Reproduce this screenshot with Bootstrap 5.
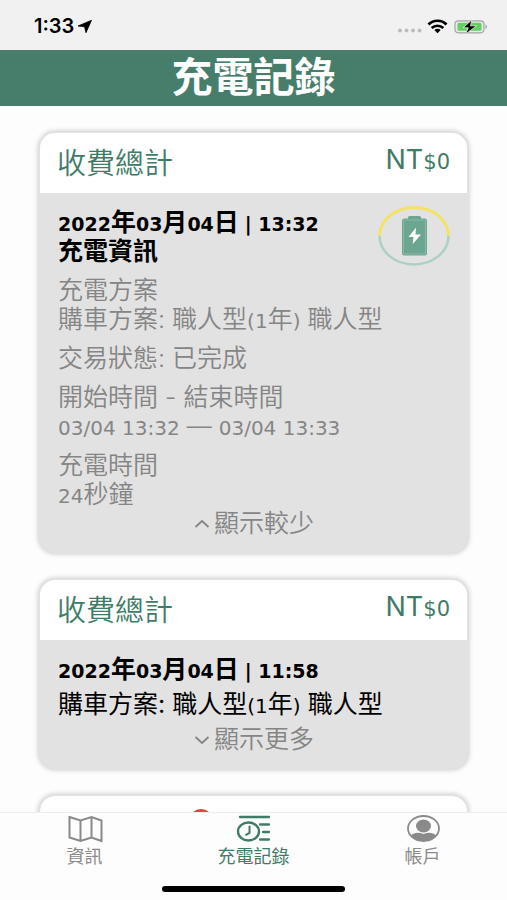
<!DOCTYPE html>
<html lang="zh-Hant">
<head>
<meta charset="utf-8">
<meta name="viewport" content="width=device-width, initial-scale=1">
<title>充電記錄</title>
<link href="https://cdn.jsdelivr.net/npm/bootstrap@5.3.0/dist/css/bootstrap.min.css" rel="stylesheet">
<style>
  body { font-family: Inter, "Noto Sans CJK TC", sans-serif; font-size: 25px; line-height: 29px; background: #fdfdfd; color: #000; }
  .status-bar { background: #f1f1f1; height: 50px; padding: 3px 18px 0 34px; font-size: 20px; }
  .page-head { background: #467e6b; height: 56px; }
  .page-head h1 { font-size: 41px; line-height: 54px; }
  .feed { padding: 26px 39px 0; min-height: 0; gap: 26px; }
  .record { border-radius: 16px; background: #e2e2e2; box-shadow: 0 0 5px 1px rgba(0, 0, 0, .2); border: 1px solid #e2e2e2; overflow: hidden; flex-shrink: 0; }
  .record-head { background: #fff; color: #3f7c67; height: 60px; padding: 0 17px; }
  .record-head h2 { font-size: 29px; line-height: 62px; font-weight: 350; }
  .amount { font-size: 27px; line-height: 54px; }
  .record-body { padding: 15px 17px 14px 18px; }
  .num { font-family: "DejaVu Sans", sans-serif; font-size: 20px; line-height: 20px; font-weight: 400; }
  .date-num { font-family: "DejaVu Sans", sans-serif; font-size: 19px; line-height: 20px; }
  .cents { font-family: "DejaVu Sans", sans-serif; font-size: 21px; line-height: 20px; }
  .info { color: #858585; font-weight: 350; }
  .more { color: #858585; font-weight: 350; border: 0; background: none; padding: 0; gap: 4px; }
  .gap-info { gap: 10px; }
  .gap-brief { gap: 6px; }
  .peek { min-height: 80px; padding: 13px 149px; background: #fff; }
  .tab-bar { background: #fdfdfd; border-top: 1px solid #eee; height: 88px; flex-shrink: 0; }
  .tab-bar a { font-size: 18px; line-height: 26px; color: #8a8a8a; padding-top: 1px; }
  .tab-bar a.active { color: #3f7c67; }
  .home-line { width: 36%; height: 6px; border-radius: 3px; background: #000; margin-bottom: 8px; }
</style>
<script src="https://cdn.jsdelivr.net/npm/bootstrap@5.3.0/dist/js/bootstrap.bundle.min.js"></script>
</head>
<body class="vh-100 d-flex flex-column overflow-hidden">
  <div class="status-bar d-flex align-items-center justify-content-between flex-shrink-0">
    <div class="d-flex align-items-center gap-1 fw-semibold">
      <span>1:33</span>
      <svg width="14" height="13" viewBox="0 0 14 13" aria-hidden="true"><path d="M13.500.3 0 6l6.500.7L8 12.700z" stroke="#000" stroke-width=".8" stroke-linejoin="round"/></svg>
    </div>
    <div class="d-flex align-items-center">
      <svg width="92" height="16" viewBox="0 0 92 16" aria-hidden="true">
        <g fill="#bcbcbc"><circle cx="3" cy="11.500" r="2"/><circle cx="9.500" cy="11.500" r="2"/><circle cx="16" cy="11.500" r="2"/><circle cx="22.500" cy="11.500" r="2"/></g>
        <g fill="none" stroke="#000" stroke-width="2.700"><path d="M31.500 5.500c5-5 13-5 18 0"/><path d="M34.700 9c3.300-3 8.300-3 11.600 0"/></g>
        <path d="M37.300 11c2-1.600 4.400-1.600 6.400 0l-3.200 3.200z"/>
        <rect x="58" y="1.800" width="29" height="12" rx="3.500" fill="#e9e9e9" stroke="#a4a4a4" stroke-width="1.200"/>
        <rect x="60.500" y="3.800" width="24" height="8" rx="1.500" fill="#63d063"/>
        <path d="M88.500 5.500V10c2-.7 2-3.800 0-4.500z" fill="#a4a4a4"/>
        <path d="M75 .8 66 8.800h5.200l-2.700 6.400L79.500 6.800h-6z" stroke="#e9f6e9" stroke-width=".8"/>
      </svg>
    </div>
  </div>

  <header class="page-head text-white text-center flex-shrink-0">
    <h1 class="m-0 fw-bold">充電記錄</h1>
  </header>

  <main class="feed flex-grow-1 d-flex flex-column overflow-hidden">
    <article class="record">
      <div class="record-head d-flex justify-content-between">
        <h2 class="m-0">收費總計</h2>
        <div class="amount">NT<span class="cents">$0</span></div>
      </div>
      <div class="record-body d-flex flex-column gap-info">
        <div class="d-flex justify-content-between">
          <div class="fw-bold">
            <div><span class="date-num">2022</span>年<span class="date-num">03</span>月<span class="date-num">04</span>日 <span class="date-num">| 13:32</span></div>
            <div>充電資訊</div>
          </div>
          <svg class="overflow-visible" width="72" height="58" viewBox="0 0 72 58" role="img" aria-label="充電狀態">
            <path d="M1.500 28a34.500 28.500 0 0 0 69 0" fill="none" stroke="#acd1c3" stroke-width="2.500"/>
            <path d="M1.500 28a34.500 28.500 0 0 1 69 0" fill="none" stroke="#f4e262" stroke-width="3"/>
            <rect x="30" y="8" width="13" height="5" rx="1.500" fill="#6ba691"/>
            <rect x="24" y="10.500" width="25" height="37" rx="2.500" fill="#6ba691"/>
            <rect x="25.500" y="12" width="22" height="34" rx="1" fill="none" stroke="#93bfae" stroke-width=".8"/>
            <path d="M38 19.500 30.500 29h5l-.8 7L43 26.500h-5.500z" fill="#fff"/>
          </svg>
        </div>
        <div class="info">
          <div>充電方案</div>
          <div>購車方案: 職人型<span class="num">(1</span>年<span class="num">)</span> 職人型</div>
        </div>
        <div class="info">交易狀態: 已完成</div>
        <div class="info">
          <div>開始時間 - 結束時間</div>
          <div><span class="num">03/04 13:32</span> — <span class="num">03/04 13:33</span></div>
        </div>
        <div>
          <div class="info">充電時間</div>
          <div class="info"><span class="num">24</span>秒鐘</div>
          <button type="button" class="more d-flex align-items-center mx-auto">
            <svg width="16" height="10" viewBox="0 0 16 10" fill="none" stroke="currentColor" stroke-width="1.800" aria-hidden="true"><path d="m1.500 8 6.500-6 6.500 6"/></svg>顯示較少
          </button>
        </div>
      </div>
    </article>

    <article class="record">
      <div class="record-head d-flex justify-content-between">
        <h2 class="m-0">收費總計</h2>
        <div class="amount">NT<span class="cents">$0</span></div>
      </div>
      <div class="record-body d-flex flex-column gap-brief">
        <div class="fw-bold"><span class="date-num">2022</span>年<span class="date-num">03</span>月<span class="date-num">04</span>日 <span class="date-num">| 11:58</span></div>
        <div>購車方案: 職人型<span class="num">(1</span>年<span class="num">)</span> 職人型</div>
        <button type="button" class="more d-flex align-items-center mx-auto">
          <svg width="16" height="10" viewBox="0 0 16 10" fill="none" stroke="currentColor" stroke-width="1.800" aria-hidden="true"><path d="m1.500 2 6.500 6 6.500-6"/></svg>顯示更多
        </button>
      </div>
    </article>

    <article class="record peek">
      <svg class="d-block" width="24" height="24" viewBox="0 0 24 24" fill="none" stroke="#e2433c" stroke-width="3" aria-hidden="true"><circle cx="12" cy="12" r="10.500"/></svg>
    </article>
  </main>

  <nav class="tab-bar d-flex flex-column justify-content-between align-items-center" aria-label="主選單">
    <div class="row g-0 w-100 text-center">
      <a href="#" class="col text-decoration-none">
        <svg class="d-block mx-auto" width="38" height="30" viewBox="0 0 38 30" fill="none" stroke="currentColor" stroke-width="2" aria-hidden="true"><path d="m3.500 3 11 3.500L25.500 3l10 3.500V27l-10-3.500-11 3.500-11-3.500zM14.500 6.500V27M25.500 3v20.500"/></svg>
        資訊
      </a>
      <a href="#" class="col active text-decoration-none" aria-current="page">
        <svg class="d-block mx-auto" width="38" height="30" viewBox="0 0 38 30" fill="none" stroke="currentColor" stroke-width="2.300" stroke-linecap="round" aria-hidden="true"><path d="M5 3h29M25 10.500h9M28 18h6M25 25.500h9"/><ellipse cx="13.500" cy="17.500" rx="10.500" ry="9"/><path d="M14.500 12.500v6.300l-3.500 2" stroke-width="2"/></svg>
        充電記錄
      </a>
      <a href="#" class="col text-decoration-none">
        <svg class="d-block mx-auto" width="38" height="30" viewBox="0 0 38 30" aria-hidden="true"><ellipse cx="19.500" cy="14.500" rx="15.500" ry="12.500" fill="none" stroke="currentColor" stroke-width="1.800"/><ellipse cx="19.500" cy="12" rx="7.500" ry="6.500" fill="currentColor"/><path d="M7 21.500c3-3.500 8-3.500 12.500-1.500C24 18 29 18 32 21.500c-3 4-8 5.500-12.500 5.500S10 25.500 7 21.500z" fill="currentColor"/></svg>
        帳戶
      </a>
    </div>
    <div class="home-line"></div>
  </nav>
</body>
</html>
